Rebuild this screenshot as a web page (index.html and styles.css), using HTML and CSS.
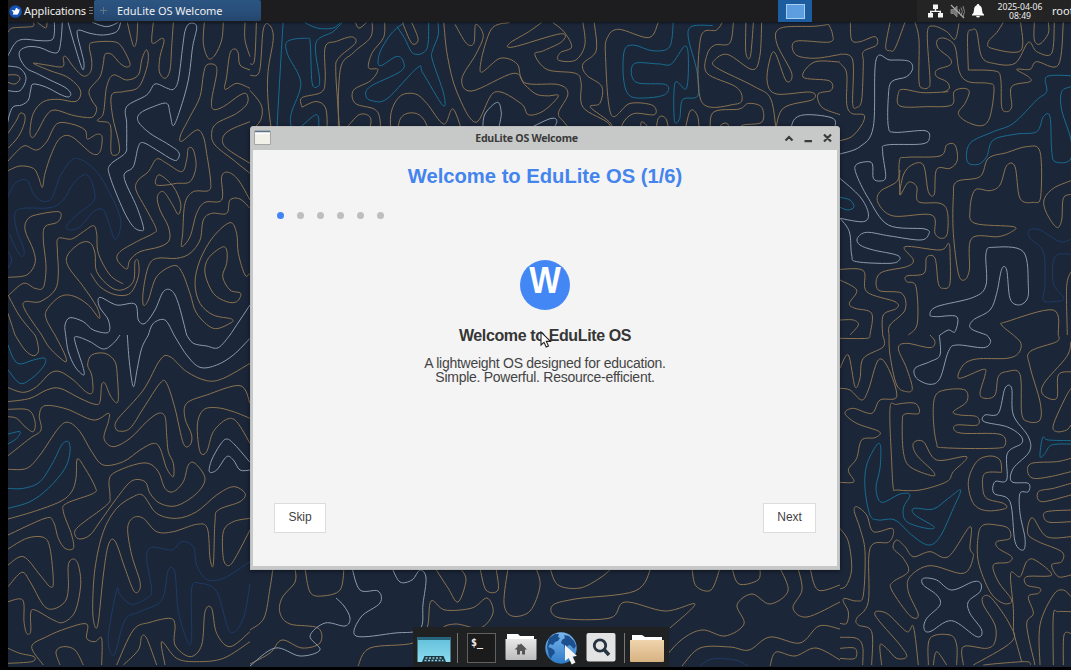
FILE: index.html
```
<!DOCTYPE html>
<html lang="en">
<head>
<meta charset="utf-8">
<title>EduLite OS Welcome</title>
<link rel="stylesheet" href="styles.css">
</head>
<body>
<main class="desktop">
  <svg class="wallpaper" id="wallpaper" width="1063" height="667" viewBox="8 0 1063 667"></svg>

  <header class="panel">
    <div class="apps">
      <svg class="apps-logo" width="13" height="13" viewBox="0 0 13 13"><circle cx="6.5" cy="6.5" r="6.3" fill="#1552b5"/><path d="M2.500 5l2 .2L6 5.500l1-2.700 1.600.6.2 1 1.800-.2-.5 3-1.600 2.500-4.800-.2.8-2z" fill="#fff"/></svg>
      <span class="apps-label">Applications</span>
      <span class="grip"></span>
    </div>
    <div class="task"><span class="task-icon"></span><span class="task-label">EduLite OS Welcome</span></div>
    <div class="pager"><span class="pager-window"></span></div>
    <div class="tray">
      <svg width="15" height="14" viewBox="0 0 15 14" fill="#f4f4f4"><path d="M5 .5h5V5H8.200v1.700H13V9h2v4.500h-5V9h1.500V8h-8v1H5v4.500H0V9h2V6.700h4.800V5H5z"/></svg>
      <svg width="15" height="15" viewBox="0 0 15 15" fill="none" stroke="#858585"><path d="M1 5.500h2.500L7 2v11L3.500 9.500H1z" fill="#777"/><path d="M9 5q1.500 2.500 0 5M11 3.500q2.500 4 0 8M13 2q3 5.500 0 11"/><path d="M1 1l13 13" stroke="#aaa" stroke-width="1.300"/></svg>
      <svg width="12" height="14" viewBox="0 0 12 14" fill="#fafafa"><path d="M6 0q1.200 0 1.300 1.300Q10 2.200 10 6q0 3 2 4.500v1H0v-1Q2 9 2 6q0-3.800 2.700-4.700Q4.800 0 6 0zM4 12h4q-.5 1.500-2 1.500T4 12z"/></svg>
    </div>
    <div class="clock"><span>2025-04-06</span><span>08:49</span></div>
    <div class="user">root</div>
  </header>

  <section class="window">
    <div class="titlebar">
      <svg class="title-icon" width="17" height="16" viewBox="0 0 17 16"><path d="M.5 1h16v13.500H.5z" fill="#f1f1ea" stroke="#a4a7a2"/><path d="M1 .8h15v1.700H1z" fill="#5d748c"/><path d="M1 2.500h15v1.500H1z" fill="#fff"/></svg>
      <span class="title">EduLite OS Welcome</span>
      <svg class="title-controls" width="50" height="12" viewBox="0 0 50 12" fill="none" stroke="#3c3c3c" stroke-width="2.200"><path d="M2.500 8.500l3.500-3.500L9.500 8.500M21.500 9.200h7.500M41 2.500l7 7M48 2.500l-7 7"/></svg>
    </div>
    <div class="content">
      <h1 class="heading">Welcome to EduLite OS (1/6)</h1>
      <div class="steps"><i class="step current"></i><i class="step"></i><i class="step"></i><i class="step"></i><i class="step"></i><i class="step"></i></div>
      <div class="badge"><span class="badge-letter">W</span></div>
      <h2 class="subheading">Welcome to EduLite OS</h2>
      <p class="copy">A lightweight OS designed for education.<br>Simple. Powerful. Resource-efficient.</p>
      <div class="actions"><button class="button">Skip</button><button class="button next">Next</button></div>
    </div>
  </section>

  <svg class="cursor" width="12" height="18" viewBox="0 0 12 18"><path d="M1 1v13l3-2.700 2.200 4.700 2.300-1-2.200-4.600h4.200z" fill="#fff" stroke="#222" stroke-width="1.100"/></svg>

  <nav class="dock">
    <svg width="34" height="34" viewBox="0 0 34 34"><defs><linearGradient id="sky" x2="0" y2="1"><stop stop-color="#62bed9"/><stop offset="1" stop-color="#8bdcf0"/></linearGradient></defs><path d="M.5 5h33v25H.500z" fill="url(#sky)"/><path d="M.5 5h33v3H.500z" fill="#25667c"/><path d="M5 30l2.500-6h19l2.500 6z" fill="#173743"/><path d="M8.500 26h17M7.500 28.500h19" stroke="#9dcbd8" stroke-width="1.500" stroke-dasharray="2 1.500"/></svg>
    <span class="divider"></span>
    <span class="terminal">$_</span>
    <svg class="home" width="32" height="34" viewBox="0 0 32 34"><defs><linearGradient id="silver" x2="0" y2="1"><stop stop-color="#e8e8e8"/><stop offset="1" stop-color="#bdbdbd"/></linearGradient></defs><path d="M2 2h11l2 2h14v7H2z" fill="#fff"/><path d="M.5 7h31v20q0 1-1 1h-29q-1 0-1-1z" fill="url(#silver)"/><path d="M16 11.500l6 6H20v5h-3v-3.500h-2v3.500h-3v-5H9.500l3-2.800V12.500h2v.5z" fill="#555"/></svg>
    <svg class="globe" width="34" height="36" viewBox="0 0 34 36"><defs><linearGradient id="sea" x2="0" y2="1"><stop stop-color="#7bb7ee"/><stop offset="1" stop-color="#2d7ac6"/></linearGradient></defs><circle cx="16" cy="16" r="15.700" fill="url(#sea)"/><path d="M4 6l6-4 4 0-1 3 2 1-2 3-3 1-2 3-3-1-2 3 3 1 3 2 1 3-3 3-1 3-2-3-1-5-1-4 1-5zM19 3l5 1 5 5 2 5-2 3-4-4-3 1 2 3-1 5-3-4-1-5-3-2 1-3 3-2z" fill="#1b4f8d"/><path d="M20 13v16l3.700-3 3 6.500 3.800-2-3-6 4.500-.5z" fill="#f4f4f4"/></svg>
    <svg class="search" width="30" height="34" viewBox="0 0 30 34"><rect x=".5" y="1" width="29" height="28.500" rx="2" fill="#e3e3e3"/><circle cx="14" cy="13.500" r="5.700" fill="none" stroke="#273340" stroke-width="2.800"/><path d="M18 17.500l5 5.500" stroke="#273340" stroke-width="3.500"/></svg>
    <span class="divider last"></span>
    <svg width="34" height="34" viewBox="0 0 34 34"><defs><linearGradient id="sand" x2="0" y2="1"><stop stop-color="#efd4ad"/><stop offset="1" stop-color="#d7b282"/></linearGradient></defs><path d="M2 3h10l3 2h17v6H2z" fill="#fff"/><path d="M0 8h34v21q0 1-1 1H1q-1 0-1-1z" fill="url(#sand)"/></svg>
  </nav>
</main>
<script src="wallpaper.js"></script>
</body>
</html>
```
FILE: styles.css
```
* { box-sizing: border-box; }
body { margin: 0; background: #000; overflow: hidden; }
.desktop { position: relative; width: 1071px; height: 670px; overflow: hidden; padding-left: 8px; font-family: "Noto Sans", sans-serif; }
.wallpaper { position: absolute; left: 8px; top: 0; background: #1b2638; }
.wallpaper path { fill: none; stroke-width: 1; stroke-linejoin: round; }
.wallpaper .tan { stroke: #8b7350; }
.wallpaper .white { stroke: #8b9bad; }
.wallpaper .teal { stroke: #196d92; }
.wallpaper .navy { stroke: #1e3b66; }

.panel { position: relative; display: flex; height: 22px; background: rgba(29, 29, 30, .93); color: #eee; white-space: nowrap; box-shadow: 0 1px 2px rgba(0, 0, 0, .5); }
.apps { display: flex; align-items: center; width: 86px; padding-left: 1px; flex: none; }
.apps-logo { margin-right: 2px; }
.apps-label { font-size: 11px; letter-spacing: -.1px; line-height: 22px; width: 64px; }
.grip { width: 4px; height: 8px; margin-left: 1px; background: repeating-linear-gradient(#777 0 1px, transparent 1px 3px); }
.task { display: flex; align-items: center; width: 167px; height: 21px; flex: none; border-radius: 2px; background: linear-gradient(#2c5581, #294f7b 50%, #24466d); }
.task-icon { width: 7px; height: 7px; margin: 0 10px 0 6px; background: linear-gradient(#657487, #657487) center / 7px 1px no-repeat, linear-gradient(#657487, #657487) center / 1px 7px no-repeat; }
.task-label { font-size: 11px; letter-spacing: -.05px; line-height: 21px; }
.pager { display: flex; align-items: center; justify-content: center; width: 34px; height: 22px; margin-left: 517px; flex: none; background: #1d5c9e; }
.pager-window { width: 19px; height: 15px; background: #5d9ee1; border: 1px solid #a7cdf2; }
.tray { display: flex; align-items: center; gap: 7px; margin-left: 105px; padding-left: 11px; width: 80px; flex: none; background: #242424; }
.clock { display: flex; flex-direction: column; align-items: center; width: 46px; flex: none; padding-top: 3px; background: #242424; font-size: 8.600px; line-height: 9px; }
.user { flex: 1; padding-left: 9px; overflow: hidden; background: #242424; font-size: 11px; line-height: 22px; }

.window { position: absolute; left: 250px; top: 126px; width: 590px; height: 444px; padding: 0 3px 4px; border-radius: 4px 4px 0 0; background: #c7c9c9; box-shadow: inset 0 0 0 1px #bbbdbf, 0 1px 4px rgba(0, 0, 0, .5); }
.titlebar { display: grid; grid-template-columns: 20px 1fr 57px; align-items: center; height: 24px; }
.title-icon { margin-left: 1px; }
.title { text-align: center; font-size: 10.600px; letter-spacing: -.28px; line-height: 24px; font-weight: 700; color: #3b3b3b; }
.title-controls { justify-self: end; margin-right: 4px; }
.content { display: flex; flex-direction: column; height: 416px; padding: 12px 21px 33px; background: #f4f4f4; font-family: "Liberation Sans", Arial, sans-serif; color: #444; }
.heading { margin: 0; text-align: center; font-size: 20.200px; line-height: 28px; color: #4384ee; white-space: nowrap; }
.steps { display: flex; gap: 13px; margin: 21.500px 0 0 2.500px; }
.step { width: 7px; height: 7px; border-radius: 50%; background: #bebebe; }
.step.current { background: #4384f4; }
.badge { width: 50px; height: 50px; margin: 41.500px auto 0; border-radius: 50%; background: #4387f5; color: #fff; text-align: center; font-weight: 700; font-size: 36px; line-height: 41px; }
.badge-letter { display: inline-block; transform: scaleX(.93); margin: 0 -1px; }
.subheading { margin: 16px 0 0; text-align: center; font-size: 16px; letter-spacing: -.38px; line-height: 20px; color: #363636; }
.copy { margin: 10px 0 0; text-align: center; font-size: 14px; letter-spacing: -.27px; line-height: 14px; }
.actions { display: flex; justify-content: space-between; margin-top: auto; }
.button { width: 52px; height: 30px; padding: 0 0 3px; border: 1px solid #dcdcdc; background: #fff; color: #3f3f3f; font: 12px "Liberation Sans", Arial, sans-serif; letter-spacing: -.1px; }
.next { width: 53px; }
.cursor { position: absolute; left: 540px; top: 331px; }

.dock { position: absolute; left: 413px; top: 627px; width: 256px; height: 40px; display: flex; align-items: flex-start; padding: 5px 4px 0; background: #202122; }
.dock svg { flex: none; margin-right: 5px; }
.divider { flex: none; width: 1px; height: 30px; margin: 1px 9px 0 1px; background: #777; }
.terminal { flex: none; width: 29px; height: 30px; margin: 1px 9px 0 0; padding: 4px 3px; border: 1px solid #606060; background: #1b1b1b; color: #eee; font: bold 10px/10px "DejaVu Sans Mono", monospace; }
.dock .home { margin-right: 8px; }
.dock .globe { margin-right: 7px; }
.dock .search { margin-right: 8px; }
.dock .last { margin-right: 5px; margin-left: 0; }
```
FILE: wallpaper.js
```
/* Contour lines of the wallpaper, grouped by the area of the desktop they cover. */
const areas = [
{x:0,y:0,s:3,lines:`
t 24,97 34,85 60,82 95,80 102,74 100,67
t 112,67 137,84 141,67
w 24,167 45,130 70,118 120,122 155,120 163,100 163,67
w 187,67 183,120 175,155 155,157 120,143 85,140 60,152 60,175 80,205 110,220 150,240 195,262 212,280 205,291 180,283 140,262 100,252 92,270 85,300 65,315 40,320 28,345 24,365
w 204,67 225,140 247,207 252,190 243,150 232,105 236,90 270,100 310,105 350,95 362,67
w 277,67 320,80 355,67
t 100,190 140,195 188,200 190,172 200,172 220,200 250,228 272,215 275,180 268,140 280,127 340,125 365,140 390,190 380,201 360,190 335,163 315,163 310,190 300,230 268,270 275,300 290,325 280,350 255,352 215,345 165,330 140,345 115,390 98,413 90,395 100,340 130,305 175,298 225,305 242,285 235,260 200,230 150,212 100,190
t 382,67 392,110 402,140 410,120 413,67
t 460,67 455,120 462,130 485,115 492,125 480,170 478,215 495,235 510,210 515,140 520,67
w 556,90 548,140 535,240 520,268 500,264 465,252 440,285 380,320 380,370 380,430 375,460 330,495 330,530 370,630 400,680 425,692 430,680 410,620 372,530 400,500 415,440 430,428 470,450 520,480 535,475 535,455 500,430 450,400 415,365 420,340 460,320 500,310 510,340 520,377 540,330 565,240 578,140 590,80 570,70 556,90
t 292,362 310,340 320,260 340,225 380,240 415,225 425,180 438,150 445,165 440,205 415,262 370,275 335,285 338,350 355,420 358,455 345,466 333,455 333,390 325,368 292,362
t 613,67 610,130 625,175 645,165 665,120 670,67
t 735,67 735,120 750,170
t 750,265 710,250 675,268 680,230 690,160 705,147 715,160 720,195 750,210
t 750,520 700,480 645,435 635,400 650,370 710,340 742,310 740,282 720,285 670,320 640,328 635,300 650,220 645,195 620,195 610,225 600,290 570,350 542,405 545,424 590,390 610,410 620,460 632,545 625,572 580,575 555,610 548,700 545,740 570,710 590,640 615,607 665,600 665,530 685,517 715,540 750,600
t 750,365 690,390 668,415 680,445 750,490
t 24,445 55,410 73,370 74,345 60,340 50,360 24,400
t 24,483 50,455 75,437 110,450 140,425 170,372 215,372 255,390 262,417 290,403 306,410 300,455 275,460 215,410 180,415 155,460 135,520 127,562 115,530 100,505 60,498 24,512
t 24,225 50,225 60,237 45,252 24,247
w 24,198 60,205 78,235 60,272 24,272
n 24,590 45,550 80,540 100,580 125,603 155,595 180,530 215,480 245,480 290,515 330,580 360,650 360,690 345,718 330,680 310,630 280,635 240,680 210,690 200,678 230,645 275,610 285,585 270,535 250,525 220,550 190,600 150,623 70,625 45,640 50,690 72,750 65,770 45,740 28,700
n 24,755 35,780 24,805
t 24,832 80,825 105,790 100,750 75,690 85,655 120,642 175,635 183,650 170,668 135,680 130,720 138,800 130,862 105,865 70,850 24,888
t 24,885 60,950 105,1005
t 24,940 45,1005
t 165,1005 140,960 140,930 180,890 220,888 265,915 298,955 290,920 250,860 205,800 203,765 240,730 270,728 285,760 290,815 330,860 365,870 400,845 405,785 415,785 415,830 390,880 345,884 300,860 272,820
t 125,1005 75,930 75,905 120,905 165,870 175,820 172,750 175,715 215,717 250,695 280,677 290,700 295,760 330,825 370,852
t 380,807 352,780 360,755 410,725 460,700 468,685 440,630 408,570 415,540 445,515 470,477 500,490 545,515 560,480 565,445 580,450 588,500 570,545 530,550 500,555 470,555 467,540 480,525 520,560 542,610 535,643 515,610 490,575 472,590 480,630 505,680 508,720 480,740 420,755 390,780 380,807
t 750,625 720,597 690,600 680,640 635,640 610,660 600,720 570,760 530,775 470,775 445,800 430,870 430,915 445,900 470,830 520,797 545,815 570,880 590,940 640,985 690,970 695,957 640,945 600,910 585,850 600,780 640,710 690,668 710,700 715,760 735,825 750,820
t 722,880 690,870 668,830 680,790 680,750 665,742 625,775 615,820 640,880 680,905 710,905 722,880
w 197,1005 195,975 210,953 250,965 280,990 325,997 325,960 298,920 300,892 350,915 405,912 415,960 435,970 465,930 490,875 515,872 535,910 560,1005
w 445,1005 460,970 495,960 522,1005
w 690,1005 750,915`},
{x:0,y:335,s:3,lines:`
t 45,0 75,45 100,62 115,50 112,20 105,0
t 125,0 150,40 195,80 195,60 165,0
w 197,0 205,50 225,95 250,120 250,100 225,20 230,5 270,20 310,42 340,25 360,0
w 382,0 388,80 400,155 412,100 425,40 445,0
w 522,0 560,60 600,97 650,90 700,60 750,10
w 560,0 580,25 620,33 655,38 690,0
e 24,30 40,70 60,87 100,75 135,70 130,95 95,130 60,145 24,105
t 24,158 70,172 110,155 150,115 180,110 220,135 260,172 278,170 275,120 263,90 275,60 315,55 345,80 352,125 355,190 348,203 330,180 315,145 305,150 300,200 285,208 240,190 180,160 140,165 90,190 24,200
t 24,223 85,225 105,260 100,290 75,275 50,250 24,245
e 24,297 60,290 50,310 24,327
t 24,362 90,310 123,285 118,240 135,212 200,222 280,255 325,235 325,260 312,310 340,335 390,310 440,260 475,235 495,245 500,300 505,350 520,385 520,425 500,400 480,340 460,325 420,345 370,380 310,390 275,350 240,290 205,262 175,280 120,360 80,400 24,403
e 24,460 70,460 120,440 160,380 185,330 205,320 210,350 195,400 145,460 90,500 24,520
t 24,552 100,530 180,500 215,470 228,430 232,372 255,400 285,455 280,475 200,505 190,530 215,600 220,640 195,640 175,610 160,560 135,550 24,600
t 24,642 80,610 130,607 150,640 160,740 150,755 120,720 70,665 24,690
t 24,755 65,712 90,740 130,810 160,822 195,800 205,760 205,690 220,672 235,690 242,750 225,830 190,862 160,855 105,825 92,835 92,890 80,895 72,860 68,795 24,800
t 345,275 355,250 430,165 480,75 510,65 560,110 620,137 670,130 750,85
t 345,275 355,288 390,280 430,220 480,145 500,145 525,220 550,325 570,330 575,300 555,250 560,205 620,180 720,152 750,205
t 750,250 700,230 650,218 610,225 592,270 600,350 620,350 640,290 680,253 710,260 750,325
w 750,405 720,405 700,375 680,365 650,405 628,410 635,375 660,330 680,312 705,330 750,382
t 225,600 235,575 320,510 330,485 327,440 340,415 400,390 445,385 475,410 495,460 520,470 550,440 565,390 585,385 615,430 590,475 530,512 480,505 450,475 435,440 395,438 350,490 300,560 270,600 240,612 225,600
t 285,875 278,820 285,700 310,590 350,520 400,485 430,482 470,535 530,550 590,530 650,480 700,455 735,475 720,500 655,525 645,560 640,688 630,670 622,580 590,568 520,590 470,590 430,550 400,548 383,580 395,660 420,740 415,770 400,765 375,700 345,618 325,630 310,720 295,860 285,875
t 750,550 700,560 670,590 670,670 685,692 705,670 750,585
n 330,950 325,900 350,765 360,780 395,808 440,790 455,765 440,670 455,637 515,645 545,620 580,635 590,690 620,733 670,730 750,680
n 330,950 345,955 375,855 420,830 485,795 505,705 525,715 535,830 565,925 575,900 575,760 600,745 650,770 690,890 730,850 750,745
t 24,940 60,955 102,965 95,980 24,985
t 130,990 95,935 140,905 200,880 260,867 260,910 285,920 305,910 305,990
t 180,990 168,950 190,935 225,945 250,990
t 350,990 400,885 450,862 510,850 525,870 525,930 570,965 605,930 615,830 635,820 650,895 690,935 750,890
t 370,990 415,945 425,905 440,910 470,990
t 750,920 670,970 590,980 530,970 485,920 495,990`},
{x:840,y:0,s:3,lines:`
t 31,67 35,120 60,125 105,110 110,135 70,155 70,190 65,300 50,322 38,310 38,180 0,162
t 150,67 137,140 150,152 165,145 195,67
t 225,67 237,120 237,245 250,265 265,262 270,240 262,100 280,78 320,95 345,118 357,70
t 325,275 250,278 190,268 175,280 180,318 260,320 335,315 342,275 370,265 388,275 375,310 355,340 380,365 425,377 450,350 462,265 445,250 385,245 358,215 345,140 315,115 292,120 295,145 330,175 330,195 290,210 290,230 320,245 328,265 310,277
w 0,462 60,440 100,380 108,180 150,180 205,183 218,205 200,230 155,245 145,290 145,380 165,397 255,392 268,415 245,432 140,435 128,455 137,530 120,543 100,535 98,495 85,485 50,493 48,520 85,595 145,675 255,687 265,705 240,720 150,708 80,697 52,715 60,735 100,750 170,765 178,780 150,790 50,785 35,765 28,695 0,655
t 490,67 470,98 445,125 455,145 542,152 542,67
t 385,210 383,105 395,90 410,95 425,170 460,190 525,190 565,127 590,155 635,160 643,67
t 385,210 465,213 482,235 485,320 500,335 515,320 515,260 570,245 565,230 530,208 570,208 590,185 655,195 670,67
t 583,67 583,120 600,132 625,100 625,67
e 693,227 620,230 620,275 590,300 520,370 460,395 390,430 382,485 415,493 440,470 460,420 530,402 590,395 610,350 630,350 635,450 645,485 690,480 693,420 665,330 665,275 693,260
t 0,190 20,220 20,310 35,340 72,345 65,375 35,410 0,422
w 0,535 60,590 85,640 70,665 0,655
e 0,592 30,600 42,620 25,630 0,622
t 180,585 178,485 200,472 300,468 320,435 345,435 352,480 330,505 290,508 283,582 265,575 250,495 215,495 190,525 180,585 205,547 230,560 235,605 300,610 322,635 322,700 305,715 285,700 275,645 160,648 115,610 120,575 170,545 180,510
t 355,820 340,700 340,590 350,545 420,530 445,475 500,458 560,440 600,455 602,590 580,607 540,595 525,500 500,497 480,555 450,572 405,570 390,630 405,670 520,680 515,695 475,710 395,715 388,810 373,840 355,820
t 693,542 640,565 612,600 620,640 650,682 665,660 670,595 693,583
n 693,717 660,725 600,690 568,690 570,715 610,755 615,850 610,900 640,905 672,895 640,850 645,770 693,763
t 330,750 330,850 310,865 295,850 285,775 260,772 252,820 200,828 200,845 228,860 232,970 205,1005
t 330,750 325,730 300,750 195,740 220,780 200,800 120,820 115,870 185,880 195,930 150,975 147,1005
t 0,808 70,812 80,875 165,905 170,925 130,945 128,1005
t 0,840 50,870 28,910 45,925 95,940 90,1005
t 0,960 40,960 55,975 30,1005
w 300,1005 325,990 345,995 350,950 290,950 270,945 290,920 400,892 438,855 438,760 460,742 550,755 565,860 560,900 535,915 510,895 500,810 485,808 470,880 450,930 400,960 392,985 440,1005
t 520,1005 485,975 500,965 640,930 655,1005
t 693,815 680,860 682,1005`},
{x:840,y:335,s:3,lines:`
t 0,10 80,10 90,0
t 0,100 25,60 45,155 60,130 70,70 130,35 128,0
t 147,0 150,60 170,150 200,170 217,160 200,100 175,40 200,25 270,38 285,20 270,0
t 0,160 30,165 65,195 85,165 115,75 145,100 170,185 120,195 95,235 40,220 15,235 50,265 118,290 105,308 65,315 50,370 25,405 42,440 0,442
w 298,0 300,60 270,80 225,100 230,130 270,148 300,130 325,50 350,30 430,38 452,20 440,0
t 520,0 543,25 535,55 500,70 410,72 370,90 357,130 430,103 435,120 420,175 435,190 465,180 475,125 500,110 540,118 545,235 565,260 600,255 600,200 570,95 570,50 650,20 655,0
t 693,20 680,65 612,145 610,180 650,190 655,120 693,110
t 693,160 675,190 640,270 650,290 680,285 693,270
t 290,325 280,250 285,185 315,165 375,165 380,200 340,230 360,240 410,245 412,270 350,270 343,285 370,295 480,298 495,330 460,340 310,338 290,325
t 160,460 155,380 150,220 170,208 225,205 237,235 195,237 187,260 190,350 210,395 275,422 280,410 230,360 220,325 250,320 290,375 380,365 340,410 320,440 240,465 170,465 160,460
e 122,335 110,330 80,390 75,460 90,540 115,555 165,555 215,600 265,630 300,605 340,520 362,465 325,490 280,522 222,520 225,540 282,575 260,580 200,560 190,520 210,480 180,477 125,502 108,460 120,400 122,335
t 485,410 480,375 450,363 410,380 385,440 400,505 440,527 497,520 490,505 440,490 428,455 435,415 485,412
w 550,645 525,620 510,500 462,475 465,440 500,435 502,355 545,325 540,300 500,275 432,260 435,240 475,235 495,160 515,160 520,240 565,305 568,350 520,400 515,440 565,445 565,470 540,475 540,535 555,610 550,645
e 693,317 625,315 608,308 600,365 615,355 635,330 693,327
t 693,370 650,380 575,385 563,410 580,430 630,425 693,410
t 693,445 640,460 595,470 605,500 693,480
t 693,525 620,530 612,548 630,562 693,560
t 160,600 155,580 100,590 80,540 50,515 43,530 60,580 75,650 70,780 50,798 15,790 10,800 25,830 20,865 0,865
t 160,600 145,622 90,640 85,800 50,850 55,870 95,890 95,990
t 0,580 25,620 35,700 20,750 0,762
t 160,640 170,615 195,635 220,665 270,650 325,665 390,575 390,640 400,665 370,715 270,692 210,725 205,770 235,840 210,842 155,765 160,740 205,710 190,670 160,640
w 250,730 290,735 335,765 400,740 422,745 420,770 385,800 390,835 425,885 410,905 335,857 270,890 252,880 260,850 300,810 290,780 250,750 250,730
t 470,570 505,580 510,610 470,620 475,640 515,665 505,682 460,690 475,740 515,795 490,805 450,770 415,680 415,600 430,570 470,570
t 693,605 620,605 577,548 563,595 595,620 665,650 665,680 635,690 655,725 693,720
t 370,990 370,935 440,940 465,920 465,870 430,810 430,785 455,790 510,870 515,920 400,990
t 520,890 520,820 512,715 540,725 560,680 585,675 635,720 560,725 560,750 600,760 595,775 565,785 580,835 560,870 585,990
t 520,890 545,980
t 600,990 600,870 640,780 670,765 693,785
t 640,990 640,840 655,830 693,830
t 670,990 672,900 693,895
t 125,990 120,930 140,940 170,970 200,965 180,930 105,840 140,835 200,890 220,875 235,990
t 0,907 50,910 68,935 68,990
t 0,940 45,940 45,970 0,970
t 265,990 270,910 330,900 350,930 350,990
t 280,990 290,950 320,990
t 430,990 480,985 560,980 572,990`},
{x:250,y:15,s:2.658,lines:`
t 0,130 12,120 17,20
t 0,160 25,150 35,40 50,25 62,60 48,150 48,230 60,330
t 0,200 30,240 28,280 0,310
e 88,20 82,120 75,240 70,330
e 145,20 180,35 220,35 240,20
e 245,20 220,45 175,75 185,170 180,190 165,180 160,75 150,62 100,70 100,105 135,180 110,260 110,295 130,300 175,265 183,290 175,315 145,330
t 138,245 138,220 190,205 200,170 200,85 230,70 270,58 280,75 235,115 228,150 235,270 232,330
t 138,245 175,230 200,245 205,290 200,330
t 280,20 290,35 310,20
t 325,20 320,60 275,100 240,145 240,300 290,265 318,270 320,295 305,330
t 358,20 355,60 325,100 315,140 340,145 320,175 275,200 280,235 330,250 345,275 347,330
t 260,330 290,300 292,330
e 410,20 375,50 345,100 345,135 390,110 408,125 400,150 320,190 308,215 325,228 365,222 445,140 460,155 512,240 515,210 485,120 485,95 500,55 500,20
e 390,30 410,60 435,103 470,90 475,20
t 405,20 430,75 447,65 430,20
t 375,330 375,260 400,215 440,210 470,235 515,290 540,250 570,330
t 390,330 400,275 430,260 460,275 485,330
t 515,20 525,110 550,205 600,285 650,205 720,235 740,265 780,255 820,215 790,215 760,210 730,185 700,155 590,202 563,170 600,105 620,55 600,25 595,75 575,75 545,25
t 690,20 640,40 612,150 665,115 710,130 730,180 820,185 845,210 820,260 835,285 875,330
w 620,330 620,280 630,255 658,232 668,260 670,330 800,275 805,300 725,330
t 775,20 740,45 690,75 700,85 825,50 830,70 780,95 757,105 790,145 865,155 880,180 885,245 955,290 950,330
t 805,20 835,45 855,85 825,100 820,120 865,120 890,80 885,20
t 915,20 920,95 885,130 895,160 935,190 930,235 905,245 960,290 960,330
t 1085,20 1060,60 980,38 950,60 945,110 960,265 1010,235 1070,240 1075,265 1020,262 990,290 988,330
e 1125,20 1115,85 1070,95 1020,80 995,95 993,170 1010,215 1060,220 1105,210 1105,185 1025,178 1020,130 1085,130 1120,130 1155,83 1165,110 1160,195 1130,180 1128,280 1142,275 1150,225 1190,215 1188,150 1165,60 1175,30 1230,28
t 1255,20 1240,40 1198,60 1200,230 1290,237 1308,220 1290,190 1215,155 1215,105 1235,80 1275,75 1285,20
t 1318,20 1318,100 1330,110 1338,20
t 1360,20 1355,110 1335,145 1270,105 1235,120 1240,140 1340,190 1385,225 1400,330
t 1538,25 1500,30 1410,35 1400,75 1440,155 1425,175 1395,100 1380,125 1375,180 1400,210 1490,205 1495,225 1415,250 1395,330
t 1568,105 1500,115 1450,105 1450,70 1540,72 1548,50 1538,25
t 1568,125 1500,125 1470,165 1540,175 1545,200 1510,210 1520,245 1568,265
w 1435,330 1445,280 1480,265 1550,275 1550,305 1520,320 1485,330
t 1040,330 1040,285 1060,300 1075,330 1085,275 1105,275 1120,320 1150,320 1170,255 1190,270 1195,330
t 1225,330 1230,260 1300,250 1325,235 1360,245 1360,285 1305,295 1300,330
t 1245,330 1250,295 1270,290 1275,330`},
{x:250,y:568,s:1,lines:`
t 0,62 14,50 20,20 23,0
t 0,96 20,85 32,72 52,80 70,75 68,60 40,56 30,45 32,30 45,14 45,0
t 55,0 60,24 72,28 90,22 94,0
w 102,0 110,22 128,23 130,35 111,49 106,68 145,65 170,61 173,36 176,10 170,2 162,12 150,14 142,0
w 0,98 25,80 50,88 70,82 60,68 75,55 95,58 100,50 94,38 86,30
t 185,0 198,20 208,34 216,12 210,0
t 188,98 190,64 205,56 230,60 243,45 237,30 222,40 195,42 181,33 177,60 163,75 120,80 108,98
t 230,0 236,22 248,22 246,0
t 258,0 254,35 262,48 280,43 290,18 286,0
t 300,0 308,17 330,20 350,10 362,0
t 420,60 445,36 415,43 375,34 360,50 310,50 302,38 325,31 385,23 401,0
w 255,98 250,70 270,62 320,60
t 408,98 430,73 452,62 475,68 494,56 487,37 502,26 520,36 538,23 530,0
t 442,0 446,18 461,22 470,0
t 482,0 489,16 508,12 510,0
t 432,98 450,80 480,79 499,82 520,69 550,75 569,58 590,61
t 548,0 552,22 543,40 557,49 590,34
t 560,0 568,22 590,17
n 450,98 462,91 485,92 498,98
t 520,98 526,84 545,88 566,80 590,92`}
];

const kinds = {t:'tan', w:'white', e:'teal', n:'navy'};
const svg = document.getElementById('wallpaper');

/* Joins the points of a contour with a Catmull-Rom spline. */
function contour(points, closed) {
  const n = points.length;
  const at = i => closed ? points[(i + n) % n] : points[Math.max(0, Math.min(n - 1, i))];
  let d = `M${at(0)}`;
  for (let i = 0; i < (closed ? n : n - 1); i++) {
    const [a, b, c, e] = [at(i - 1), at(i), at(i + 1), at(i + 2)];
    d += `C${b.map((v, k) => v + (c[k] - a[k]) / 6)} ${c.map((v, k) => v - (e[k] - b[k]) / 6)} ${c}`;
  }
  return d;
}

for (const area of areas) {
  for (const line of area.lines.trim().split('\n')) {
    const [kind, ...pairs] = line.trim().split(' ');
    const points = pairs.map(p => p.split(',').map((v, k) => +v / area.s + (k ? area.y : area.x)));
    const closed = pairs[0] === pairs[pairs.length - 1];
    if (closed) points.pop();
    const path = document.createElementNS('http://www.w3.org/2000/svg', 'path');
    path.setAttribute('class', kinds[kind]);
    path.setAttribute('d', contour(points, closed));
    svg.append(path);
  }
}
```
